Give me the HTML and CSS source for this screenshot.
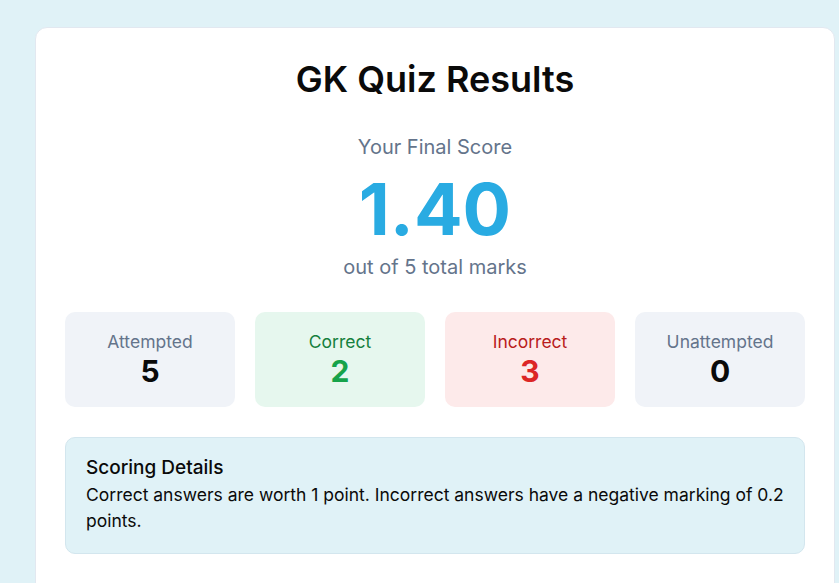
FILE: index.html
```html
<!DOCTYPE html>
<html lang="en">
<head>
<meta charset="utf-8">
<title>GK Quiz Results</title>
<link rel="stylesheet" href="styles.css">
</head>
<body>
<main class="page">
  <section class="card">
    <h1 class="title">GK Quiz Results</h1>
    <div class="score">
      <p class="score-label">Your Final Score</p>
      <p class="score-value">1.40</p>
      <p class="score-total">out of 5 total marks</p>
    </div>
    <div class="stats">
      <div class="stat stat-neutral">
        <span class="stat-label">Attempted</span>
        <span class="stat-value">5</span>
      </div>
      <div class="stat stat-good">
        <span class="stat-label">Correct</span>
        <span class="stat-value">2</span>
      </div>
      <div class="stat stat-bad">
        <span class="stat-label">Incorrect</span>
        <span class="stat-value">3</span>
      </div>
      <div class="stat stat-neutral">
        <span class="stat-label">Unattempted</span>
        <span class="stat-value">0</span>
      </div>
    </div>
    <div class="details">
      <h2 class="details-title">Scoring Details</h2>
      <p class="details-text">Correct answers are worth 1 point. Incorrect answers have a negative marking of 0.2 points.</p>
    </div>
  </section>
</main>
</body>
</html>
```

FILE: styles.css
```css
* { box-sizing: border-box; }
html, body { margin: 0; padding: 0; }
body {
  background: #e0f2f7;
  font-family: Inter, "Noto Sans", sans-serif;
  color: #0f172a;
  overflow: hidden;
}
.page {
  padding: 27px 0 0 35px;
}
.card {
  width: 800px;
  background: #ffffff;
  border: 1px solid #e2e8f0;
  border-radius: 12px;
  padding: 29px 29px 40px;
  min-height: 600px;
}
.title {
  margin: 0;
  text-align: center;
  font-size: 36px;
  line-height: 44px;
  font-weight: 600;
  color: #0a0a0a;
}
.score {
  text-align: center;
  margin-top: 32px;
}
.score-label {
  margin: 0;
  font-size: 20px;
  line-height: 28px;
  color: #64748b;
}
.score-value {
  margin: 4px 0 0;
  font-size: 72px;
  line-height: 88px;
  font-weight: 700;
  color: #29abe2;
}
.score-total {
  margin: 0;
  font-size: 20px;
  line-height: 28px;
  color: #64748b;
}
.stats {
  display: grid;
  grid-template-columns: repeat(4, 1fr);
  gap: 20px;
  margin-top: 31px;
}
.stat {
  height: 95px;
  border-radius: 10px;
  display: flex;
  flex-direction: column;
  align-items: center;
  justify-content: center;
  padding-bottom: 1px;
}
.stat-neutral { background: #f0f3f8; }
.stat-good { background: #e6f7ee; }
.stat-bad { background: #fdeaea; }
.stat-label {
  font-size: 17.5px;
  line-height: 23px;
  color: #64748b;
}
.stat-value {
  font-size: 30px;
  line-height: 36px;
  font-weight: 700;
  color: #0a0a0a;
}
.stat-good .stat-label { color: #15803d; }
.stat-good .stat-value { color: #16a34a; }
.stat-bad .stat-label { color: #b91c1c; }
.stat-bad .stat-value { color: #dc2626; }
.details {
  margin-top: 30px;
  background: #e0f2f7;
  border: 1px solid #d3e6ee;
  border-radius: 10px;
  padding: 17px 20px 19px;
}
.details-title {
  margin: 0;
  font-size: 19px;
  line-height: 26px;
  font-weight: 500;
  color: #0a0a0a;
}
.details-text {
  margin: 1px 0 0;
  font-size: 17.5px;
  line-height: 26px;
  color: #0a0a0a;
}
```
